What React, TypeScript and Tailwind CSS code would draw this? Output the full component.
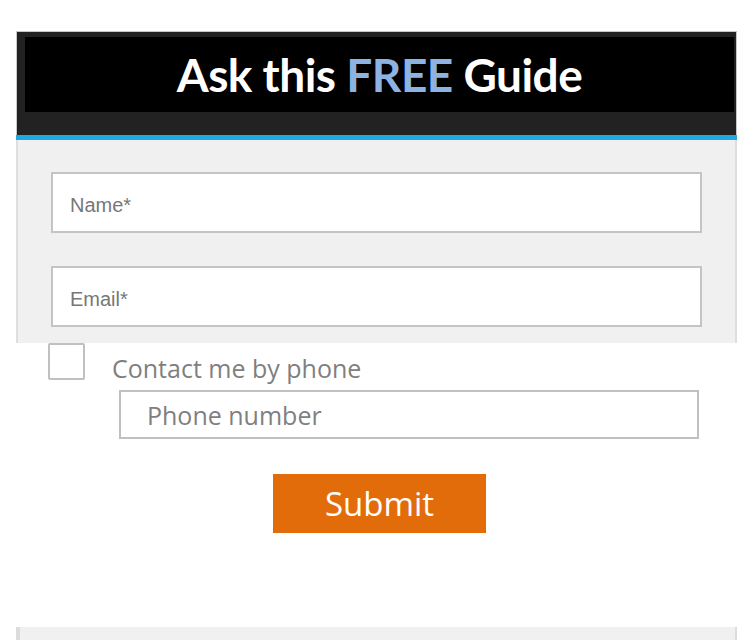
import React, { useState } from 'react';

export default function App() {
  const [form, setForm] = useState({ name: '', email: '', phone: '' });
  const [byPhone, setByPhone] = useState(false);

  return (
    <div className="h-[640px] overflow-hidden bg-white pt-[31px]">
      {/* header */}
      <div className="ml-[16px] w-[721px] border-t border-x border-[#c8c8c8] bg-[#222222] pt-[5px] pb-[23px] pl-[8px] pr-[2px]">
        <div className="flex h-[75px] items-center justify-center bg-black">
          <h1 className="font-['Lato'] text-[46px] font-bold leading-none tracking-[-0.5px] text-white">
            Ask this <span className="text-[#8db3e2]">FREE</span> Guide
          </h1>
        </div>
      </div>
      <div className="ml-[16px] h-[5px] w-[721px] bg-[#1fa9e1]" />

      {/* form panel */}
      <div className="ml-[16px] flex w-[721px] flex-col gap-[33px] border-x-2 border-[#dedede] bg-[#f0f0f0] pt-[32px] pb-[16px] pl-[33px]">
        <input
          value={form.name}
          onChange={e => setForm({ ...form, name: e.target.value })}
          placeholder="Name*"
          className="h-[61px] w-[651px] border-2 border-[#c4c4c4] bg-white px-[17px] pt-[6px] font-['Liberation_Sans'] text-[20px] text-[#555] outline-none placeholder:text-[#777]"
        />
        <input
          value={form.email}
          onChange={e => setForm({ ...form, email: e.target.value })}
          placeholder="Email*"
          className="h-[61px] w-[651px] border-2 border-[#c4c4c4] bg-white px-[17px] pt-[6px] font-['Liberation_Sans'] text-[20px] text-[#555] outline-none placeholder:text-[#777]"
        />
      </div>

      {/* phone option */}
      <div className="ml-[48px] flex items-start">
        <button
          onClick={() => setByPhone(!byPhone)}
          className="h-[37px] w-[37px] rounded-[2px] border-2 border-[#c0c0c0] bg-white"
        />
        <span className="ml-[27px] mt-[10px] font-['Open_Sans'] text-[25px] leading-[30px] text-[#7f7f7f]">
          Contact me by phone
        </span>
      </div>
      <input
        value={form.phone}
        onChange={e => setForm({ ...form, phone: e.target.value })}
        placeholder="Phone number"
        className="ml-[119px] mt-[7px] block h-[49px] w-[580px] border-2 border-[#c0c0c0] bg-white px-[26px] font-['Open_Sans'] text-[25px] text-[#555] outline-none placeholder:text-[#7f7f7f]"
      />

      <button className="ml-[273px] mt-[35px] block h-[59px] w-[213px] bg-[#e36c0a] font-['Open_Sans'] text-[33px] leading-none text-white">
        Submit
      </button>

      {/* next panel peeking in */}
      <div className="ml-[16px] mt-[94px] h-[20px] w-[721px] border-l-4 border-r-2 border-[#dcdcdc] bg-[#f0f0f0]" />
    </div>
  );
}
